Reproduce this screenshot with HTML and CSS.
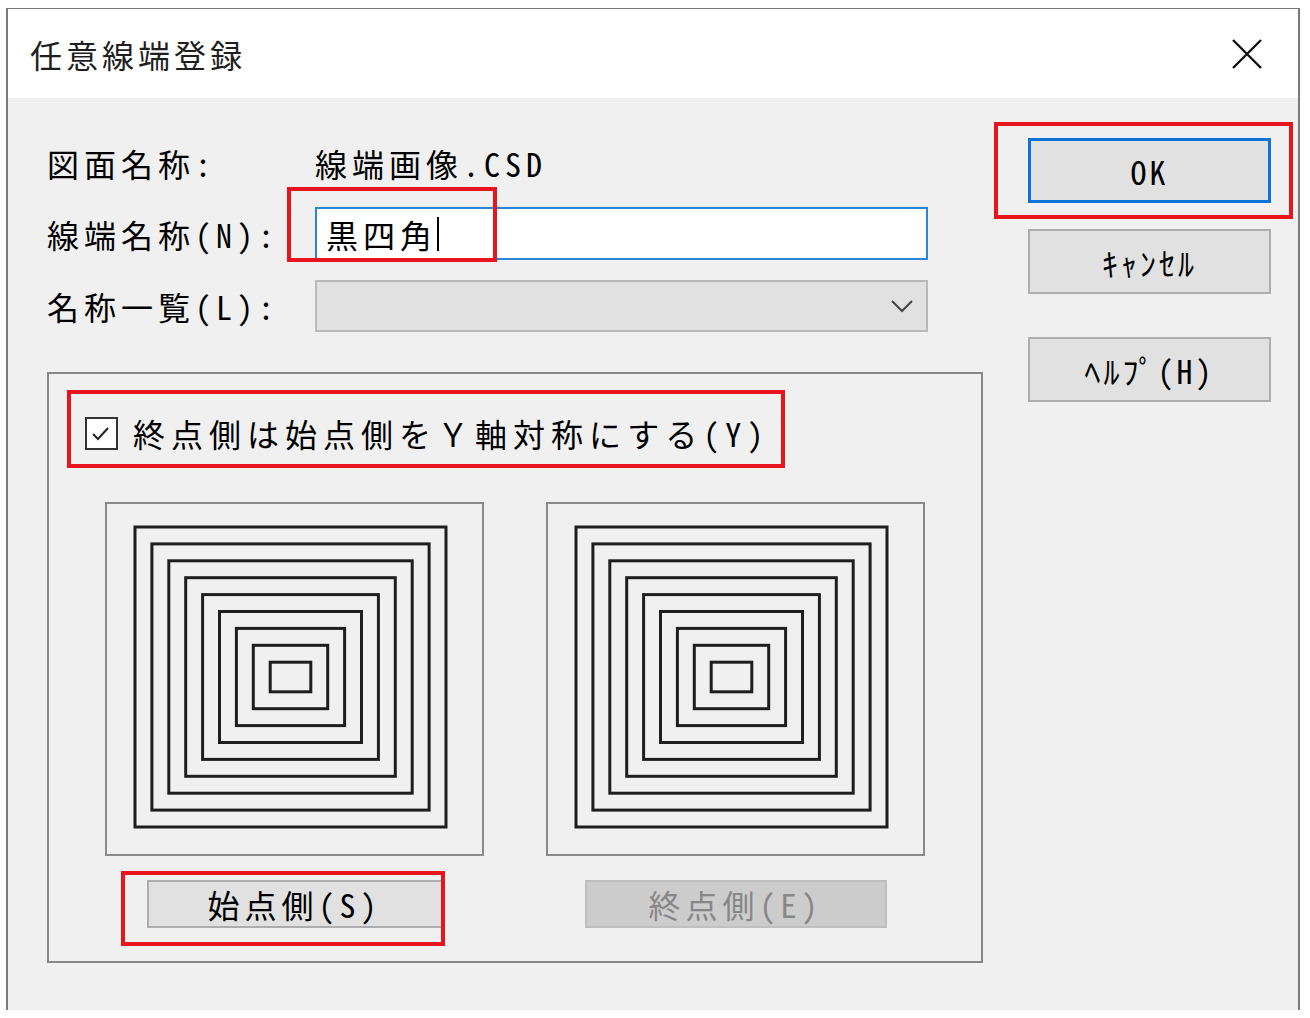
FILE: index.html
```html
<!DOCTYPE html>
<html lang="ja">
<head>
    <meta charset="UTF-8">
    <title>任意線端登録</title>
    <link rel="stylesheet" href="styles.css">
</head>
<body>

    <div class="window">
        <!-- title bar -->
        <div class="titlebar">
            <span class="title">任意線端登録</span>
            <svg class="close" width="32" height="32" viewBox="0 0 32 32">
                <path d="M2 2 L30 30 M30 2 L2 30" stroke="#111" stroke-width="2.4" fill="none"/>
            </svg>
        </div>

        <div class="dialog-body">
            <div class="main-col">
                <div class="form-grid">
                    <label class="lbl">図面名称:</label>
                    <div class="value">線端画像.CSD</div>

                    <label class="lbl" for="name">線端名称(N):</label>
                    <div class="field-wrap">
                        <div class="textbox" id="name">黒四角<span class="caret"></span></div>
                        <span class="mark mark-name"></span>
                    </div>

                    <label class="lbl">名称一覧(L):</label>
                    <div class="combo">
                        <svg width="24" height="14" viewBox="0 0 24 14">
                            <path d="M2 2 L12 12 L22 2" stroke="#444" stroke-width="2" fill="none"/>
                        </svg>
                    </div>
                </div>

                <div class="group">
                    <div class="check-row">
                        <span class="checkbox">
                            <svg width="29" height="29" viewBox="0 0 29 29">
                                <path d="M6 15 L11 20 L21 9" stroke="#222" stroke-width="2" fill="none"/>
                            </svg>
                        </span>
                        <span class="check-text">終点側は始点側をＹ軸対称にする<span class="hw">(Y)</span></span>
                        <span class="mark mark-check"></span>
                    </div>

                    <div class="previews">
                        <div class="preview">
                            <svg width="375" height="350" viewBox="0 0 375 350">
                                <g fill="none" stroke="#1e1e1e" stroke-width="3">
                                    <rect x="28" y="23" width="311" height="300"/>
                                    <rect x="44.9" y="39.9" width="277.2" height="266.2"/>
                                    <rect x="61.8" y="56.8" width="243.4" height="232.4"/>
                                    <rect x="78.7" y="73.7" width="209.6" height="198.6"/>
                                    <rect x="95.6" y="90.6" width="175.8" height="164.8"/>
                                    <rect x="112.5" y="107.5" width="142" height="131"/>
                                    <rect x="129.4" y="124.4" width="108.2" height="97.2"/>
                                    <rect x="146.3" y="141.3" width="74.4" height="63.4"/>
                                    <rect x="163.2" y="158.2" width="40.6" height="29.6"/>
                                </g>
                            </svg>
                        </div>
                        <div class="preview">
                            <svg width="375" height="350" viewBox="0 0 375 350">
                                <g fill="none" stroke="#1e1e1e" stroke-width="3">
                                    <rect x="28" y="23" width="311" height="300"/>
                                    <rect x="44.9" y="39.9" width="277.2" height="266.2"/>
                                    <rect x="61.8" y="56.8" width="243.4" height="232.4"/>
                                    <rect x="78.7" y="73.7" width="209.6" height="198.6"/>
                                    <rect x="95.6" y="90.6" width="175.8" height="164.8"/>
                                    <rect x="112.5" y="107.5" width="142" height="131"/>
                                    <rect x="129.4" y="124.4" width="108.2" height="97.2"/>
                                    <rect x="146.3" y="141.3" width="74.4" height="63.4"/>
                                    <rect x="163.2" y="158.2" width="40.6" height="29.6"/>
                                </g>
                            </svg>
                        </div>
                    </div>

                    <div class="side-buttons">
                        <div class="side-slot">
                            <div class="btn btn-start">始点側(S)</div>
                            <span class="mark mark-start"></span>
                        </div>
                        <div class="side-slot">
                            <div class="btn btn-end">終点側(E)</div>
                        </div>
                    </div>
                </div>
            </div>

            <!-- buttons on the right -->
            <div class="button-col">
                <div class="ok-wrap">
                    <div class="btn btn-ok">OK</div>
                    <span class="mark mark-ok"></span>
                </div>
                <div class="btn btn-cancel">ｷｬﾝｾﾙ</div>
                <div class="btn btn-help">ﾍﾙﾌﾟ(H)</div>
            </div>
        </div>
    </div>

</body>
</html>
```

FILE: styles.css
```css
body {
    margin: 0;
    background: #fff;
    font-family: "Noto Sans CJK JP", "Noto Sans", sans-serif;
    font-feature-settings: "hwid";
    color: #000;
}

.window {
    margin: 8px 0 0 6px;
    width: 1294px;
    height: 1002px;
    box-sizing: border-box;
    border: 2px solid #7a7a7a;
    border-top-width: 1px;
    border-bottom: none;
    background: #f0f0f0;
}

.titlebar {
    height: 89px;
    background: #fff;
    display: flex;
    align-items: center;
    justify-content: space-between;
    padding: 0 35px 0 22px;
}

.title {
    font-size: 32px;
    letter-spacing: 4px;
    color: #1f1f1f;
}

.dialog-body {
    display: flex;
    padding: 40px 0 0 39px;
}

.main-col {
    width: 936px;
}

.form-grid {
    display: grid;
    grid-template-columns: 268px 613px;
    grid-template-rows: 49px 53px 52px;
    row-gap: 20px;
    align-items: center;
}

.lbl, .value {
    font-size: 32px;
    letter-spacing: 5px;
    line-height: 1;
}

.field-wrap {
    position: relative;
    height: 100%;
}

.textbox {
    height: 100%;
    box-sizing: border-box;
    background: #fff;
    border: 2px solid #2a85d6;
    padding-left: 9px;
    font-size: 32px;
    letter-spacing: 5px;
    display: flex;
    align-items: center;
}

.caret {
    display: inline-block;
    width: 2px;
    height: 34px;
    background: #000;
    margin-left: 0;
}

.combo {
    height: 100%;
    box-sizing: border-box;
    background: #e1e1e1;
    border: 2px solid #b9b9b9;
    display: flex;
    align-items: center;
    justify-content: flex-end;
    padding-right: 12px;
}

.mark {
    position: absolute;
    border: 4px solid #e8141e;
    box-sizing: border-box;
    pointer-events: none;
}

.mark-name {
    left: -28px;
    top: -20px;
    width: 210px;
    height: 75px;
}

.group {
    margin-top: 40px;
    height: 591px;
    box-sizing: border-box;
    border: 2px solid #888;
    padding-top: 42px;
}

.check-row {
    position: relative;
    display: flex;
    align-items: center;
    height: 34px;
    margin-left: 36px;
}

.checkbox {
    width: 33px;
    height: 33px;
    box-sizing: border-box;
    border: 2px solid #333;
    background: #fff;
    display: flex;
    align-items: center;
    justify-content: center;
}

.check-text {
    margin-left: 15px;
    font-size: 32px;
    letter-spacing: 6px;
    line-height: 1;
    font-feature-settings: normal;
}

.hw {
    font-feature-settings: "hwid";
}

.mark-check {
    left: -18px;
    top: -26px;
    width: 718px;
    height: 78px;
}

.previews {
    display: flex;
    gap: 62px;
    margin-top: 52px;
    padding-left: 56px;
}

.preview {
    width: 379px;
    height: 354px;
    box-sizing: border-box;
    border: 2px solid #8a8a8a;
    background: #f0f0f0;
}

.preview svg {
    display: block;
}

.side-buttons {
    display: flex;
    gap: 62px;
    margin-top: 24px;
    padding-left: 56px;
}

.side-slot {
    position: relative;
    width: 379px;
    display: flex;
    justify-content: center;
}

.btn {
    box-sizing: border-box;
    background: #e1e1e1;
    border: 2px solid #adadad;
    display: flex;
    align-items: center;
    justify-content: center;
    font-size: 32px;
    line-height: 1;
}

.btn-start {
    width: 296px;
    height: 48px;
    letter-spacing: 5px;
}

.btn-end {
    width: 302px;
    height: 48px;
    letter-spacing: 5px;
    background: #cccccc;
    border-color: #bfbfbf;
    color: #878787;
}

.mark-start {
    left: 16px;
    top: -9px;
    width: 324px;
    height: 75px;
}

.button-col {
    margin-left: 45px;
    width: 243px;
    display: flex;
    flex-direction: column;
}

.button-col .btn {
    height: 65px;
    letter-spacing: 3px;
}

.ok-wrap {
    position: relative;
}

.btn-ok {
    border: 3px solid #0a74d6 !important;
}

.mark-ok {
    left: -34px;
    top: -16px;
    width: 299px;
    height: 97px;
}

.btn-cancel {
    margin-top: 26px;
}

.btn-help {
    margin-top: 43px;
}
```
